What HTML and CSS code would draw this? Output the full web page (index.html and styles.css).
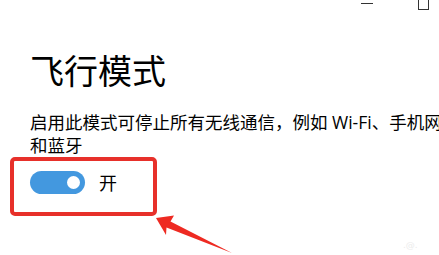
FILE: index.html
```html
<!DOCTYPE html>
<html lang="zh-CN">
<head>
<meta charset="utf-8">
<link rel="stylesheet" href="styles.css">
</head>
<body>
<div class="page">
  <header class="titlebar">
    <span class="ctl-min"></span>
    <span class="ctl-max"></span>
  </header>
  <main class="content">
    <h1 class="title">飞行模式</h1>
    <p class="desc">启用此模式可停止所有无线通信，例如 Wi-Fi、手机网络<br>和蓝牙</p>
    <div class="setting">
      <span class="toggle"><span class="knob"></span></span>
      <span class="state">开</span>
    </div>
  </main>
  <div class="highlight"></div>
  <svg class="arrow" width="90" height="45" viewBox="150 212 90 45">
    <polygon points="156,218 174,215.5 170.5,221.5 232,253 166.5,227.5 166,235" fill="#ee2a22"/>
  </svg>
  <span class="mark">.@.</span>
</div>
</body>
</html>
```

FILE: styles.css
```css
html, body {
  margin: 0;
  padding: 0;
  background: #ffffff;
  overflow: hidden;
}
.page {
  position: relative;
  width: 439px;
  height: 255px;
  overflow: hidden;
  font-family: "Noto Sans CJK SC", "Microsoft YaHei", sans-serif;
  color: #000;
}
.titlebar {
  display: flex;
  align-items: flex-start;
  height: 10px;
  padding-left: 361px;
}
.ctl-min {
  width: 12px;
  height: 1px;
  margin-top: 3px;
  background: #333;
}
.ctl-max {
  width: 9px;
  height: 9px;
  margin-left: 45px;
  border: 1px solid #333;
  border-top: none;
}
.content {
  padding-left: 30px;
}
.title {
  margin: 38px 0 0;
  font-size: 34px;
  font-weight: 400;
  line-height: 44px;
  letter-spacing: 0;
}
.desc {
  margin: 19px 0 0;
  font-family: "Open Sans", "Noto Sans CJK SC", sans-serif;
  font-size: 17.5px;
  line-height: 23px;
  white-space: nowrap;
}
.setting {
  display: flex;
  align-items: center;
  margin-top: 14px;
}
.toggle {
  display: flex;
  align-items: center;
  justify-content: flex-end;
  width: 55px;
  height: 23px;
  padding-right: 5px;
  box-sizing: border-box;
  border-radius: 12px;
  background: #4398df;
}
.knob {
  width: 13px;
  height: 13px;
  border-radius: 50%;
  background: #fff;
}
.state {
  margin-left: 14px;
  font-size: 18px;
  line-height: 23px;
}
.highlight {
  position: absolute;
  left: 10px;
  top: 157px;
  width: 147px;
  height: 59px;
  box-sizing: border-box;
  border: 4px solid #e7302a;
  border-radius: 5px;
}
.arrow {
  position: absolute;
  left: 150px;
  top: 212px;
}
.mark {
  position: absolute;
  left: 403px;
  top: 240px;
  font-size: 9px;
  color: #ececec;
  font-family: "DejaVu Sans", sans-serif;
}
```
